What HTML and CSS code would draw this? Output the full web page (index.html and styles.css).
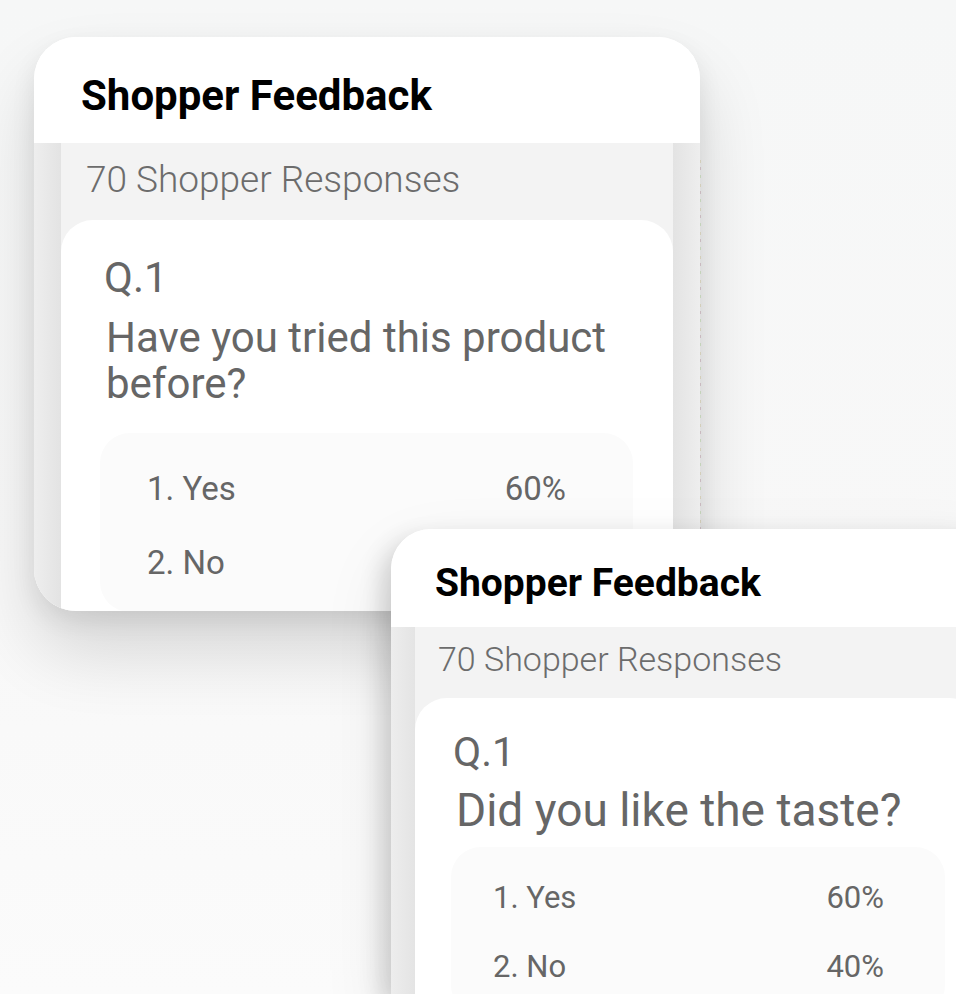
FILE: index.html
```html
<!DOCTYPE html>
<html lang="en">
<head>
<meta charset="utf-8">
<title>Shopper Feedback</title>
<link rel="stylesheet" href="styles.css">
</head>
<body>
<div class="stage">
  <section class="card card-a">
    <header class="card-head"><h1 class="title">Shopper Feedback</h1></header>
    <div class="card-body">
      <div class="panel">
        <p class="count">70 Shopper Responses</p>
        <article class="question">
          <div class="q-num">Q.1</div>
          <div class="q-text">Have you tried this product<br>before?</div>
          <ul class="answers">
            <li class="answer"><span>1. Yes</span><span>60%</span></li>
            <li class="answer"><span>2. No</span><span>40%</span></li>
          </ul>
        </article>
      </div>
    </div>
  </section>
  <div class="seam"></div>
  <section class="card card-b">
    <header class="card-head"><h1 class="title">Shopper Feedback</h1></header>
    <div class="card-body">
      <div class="panel">
        <p class="count">70 Shopper Responses</p>
        <article class="question">
          <div class="q-num">Q.1</div>
          <div class="q-text">Did you like the taste?</div>
          <ul class="answers">
            <li class="answer"><span>1. Yes</span><span>60%</span></li>
            <li class="answer"><span>2. No</span><span>40%</span></li>
          </ul>
        </article>
      </div>
    </div>
  </section>
</div>
</body>
</html>
```
FILE: styles.css
```css
* { box-sizing: border-box; }
html, body { margin: 0; padding: 0; }
body {
  width: 956px;
  height: 994px;
  overflow: hidden;
  background: linear-gradient(to bottom, #f6f7f7 0%, #f8f8f8 60%, #fbfbfb 100%);
  font-family: Roboto, "Liberation Sans", sans-serif;
}
.stage {
  position: relative;
  width: 956px;
  height: 994px;
  overflow: hidden;
}
.card {
  position: absolute;
  overflow: hidden;
  background: #ffffff;
  display: flex;
  flex-direction: column;
}
.card-a {
  left: 34px;
  top: 37px;
  width: 666px;
  height: 574px;
  border-radius: 42px;
  box-shadow: 0 40px 70px rgba(0, 0, 0, 0.14), 0 10px 24px rgba(0, 0, 0, 0.08);
}
.card-b {
  left: 391px;
  top: 529px;
  width: 614px;
  height: 465px;
  border-radius: 40px 40px 0 0;
  box-shadow: -8px 10px 24px rgba(0, 0, 0, 0.16), 0 30px 70px rgba(0, 0, 0, 0.1);
}
.seam {
  position: absolute;
  left: 700px;
  top: 160px;
  width: 1px;
  height: 370px;
  background: repeating-linear-gradient(to bottom,
    rgba(200, 190, 150, 0.5) 0 3px,
    rgba(255, 255, 255, 0) 3px 7px,
    rgba(180, 150, 160, 0.5) 7px 10px,
    rgba(255, 255, 255, 0) 10px 15px,
    rgba(170, 200, 150, 0.5) 15px 18px,
    rgba(255, 255, 255, 0) 18px 24px);
}
.card-head {
  background: #ffffff;
  flex: none;
}
.title {
  margin: 0;
  font-weight: 700;
  color: #000;
}
.card-a .card-head { height: 106px; padding: 35px 0 0 47px; }
.card-a .title { font-size: 42px; line-height: 48px; }
.card-b .card-head { height: 98px; padding: 32px 0 0 44px; }
.card-b .title { font-size: 39px; line-height: 45px; }

.card-body {
  flex: 1;
  display: flex;
  min-height: 0;
}
.card-a .card-body {
  padding: 0 27px;
  background:
    linear-gradient(to right, #eeeeee, #e3e3e3) left top / 27px 100% no-repeat,
    linear-gradient(to right, #e3e3e3, #eeeeee) right top / 27px 100% no-repeat,
    #f3f3f3;
}
.card-b .card-body {
  padding: 0 24px;
  background:
    linear-gradient(to right, #ededed, #e4e4e4) left top / 24px 100% no-repeat,
    linear-gradient(to right, #e4e4e4, #ededed) right top / 24px 100% no-repeat,
    #f3f3f3;
}
.panel {
  flex: 1;
  background: #f3f3f3;
  display: flex;
  flex-direction: column;
}
.count {
  margin: 0;
  font-weight: 300;
  color: #6c6c6c;
}
.card-a .count { font-size: 37px; line-height: 42px; padding: 16px 0 0 25px; margin-bottom: 19px; }
.card-b .count { font-size: 34px; line-height: 40px; padding: 12px 0 0 23px; margin-bottom: 19px; }

.question {
  flex: 1;
  background: #ffffff;
  border-radius: 32px 32px 0 0;
  color: #666666;
}
.card-a .question { padding: 33px 40px 0 43px; }
.card-b .question { padding: 31px 36px 0 38px; }
.q-num { font-weight: 400; }
.card-a .q-num { font-size: 42px; line-height: 49px; }
.card-b .q-num { font-size: 41px; line-height: 47px; }
.q-text { font-weight: 400; }
.card-a .q-text { font-size: 42px; line-height: 46px; margin-top: 13px; padding-left: 2px; }
.card-b .q-text { font-size: 46px; line-height: 50px; margin-top: 9px; padding-left: 3px; }

.answers {
  list-style: none;
  margin: 0;
  background: #fbfbfb;
  border-radius: 30px;
}
.card-a .answers { margin: 26px 0 0 -4px; padding: 37px 67px 30px 47px; }
.card-b .answers { margin: 12px 0 0 -2px; padding: 33px 61px 30px 42px; }
.answer {
  display: flex;
  justify-content: space-between;
}
.card-a .answer { font-size: 33px; line-height: 38px; }
.card-a .answer + .answer { margin-top: 36px; }
.card-b .answer { font-size: 31px; line-height: 36px; }
.card-b .answer + .answer { margin-top: 33px; }
```
